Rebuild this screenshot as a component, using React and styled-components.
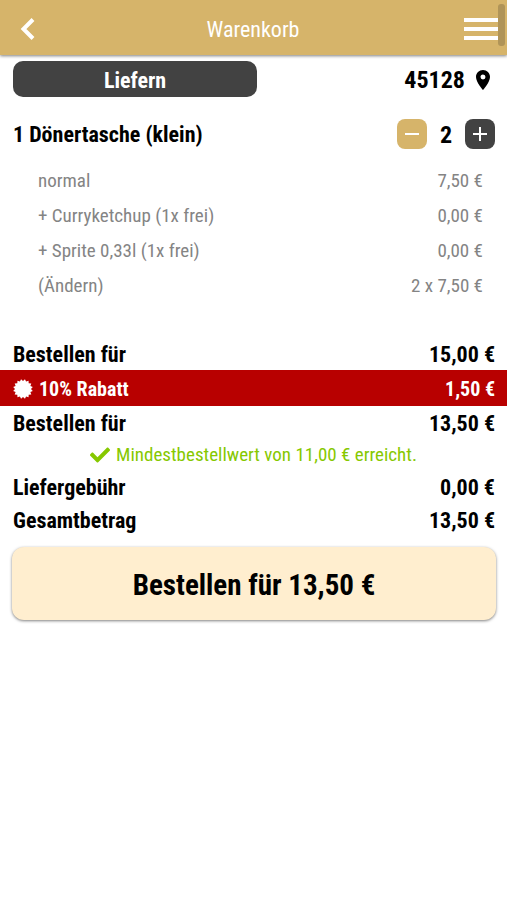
import React from "react";
import styled, { createGlobalStyle } from "styled-components";
import { FaCheck } from "react-icons/fa";
import { MdAdd, MdLocationOn, MdRemove } from "react-icons/md";

const COLORS = {
  gold: "#d6b46a",
  dark: "#424242",
  cream: "#ffeecf",
  red: "#b80000",
  green: "#86c800",
  gray: "#848484",
  black: "#000000",
  white: "#ffffff",
};

const EXTRAS = [
  { name: "normal", price: "7,50 €" },
  { name: "+ Curryketchup (1x frei)", price: "0,00 €" },
  { name: "+ Sprite 0,33l (1x frei)", price: "0,00 €" },
];

const App = () => {
  return (
    <Page>
      <GlobalStyle />
      <Header>
        <HeaderButton type="button" aria-label="Zurück">
          <BackIcon />
        </HeaderButton>
        <Title>Warenkorb</Title>
        <HeaderButton type="button" aria-label="Menü" $end>
          <MenuIcon />
        </HeaderButton>
        <ScrollThumb />
      </Header>

      <main>
        <DeliveryRow>
          <DeliveryButton type="button">Liefern</DeliveryButton>
          <ZipButton type="button">
            45128
            <MdLocationOn size={24} />
          </ZipButton>
        </DeliveryRow>

        <ItemRow>
          <ItemName>1 Dönertasche (klein)</ItemName>
          <Stepper>
            <StepButton type="button" aria-label="Weniger" $color={COLORS.gold}>
              <MdRemove size={24} />
            </StepButton>
            <Quantity>2</Quantity>
            <StepButton type="button" aria-label="Mehr" $color={COLORS.dark}>
              <MdAdd size={24} />
            </StepButton>
          </Stepper>
        </ItemRow>

        <Extras>
          {EXTRAS.map(({ name, price }) => (
            <Extra key={name}>
              <span>{name}</span>
              <span>{price}</span>
            </Extra>
          ))}
          <Extra>
            <EditLink href="#aendern">(Ändern)</EditLink>
            <span>2 x 7,50 €</span>
          </Extra>
        </Extras>

        <SumRow>
          <span>Bestellen für</span>
          <span>15,00 €</span>
        </SumRow>
        <DiscountRow>
          <DiscountLabel>
            <BadgeIcon />
            10% Rabatt
          </DiscountLabel>
          <span>1,50 €</span>
        </DiscountRow>
        <SumRow>
          <span>Bestellen für</span>
          <span>13,50 €</span>
        </SumRow>
        <MinimumNote>
          <FaCheck size={20} />
          Mindestbestellwert von 11,00 € erreicht.
        </MinimumNote>
        <SumRow>
          <span>Liefergebühr</span>
          <span>0,00 €</span>
        </SumRow>
        <SumRow>
          <span>Gesamtbetrag</span>
          <span>13,50 €</span>
        </SumRow>

        <OrderArea>
          <OrderButton type="button">Bestellen für 13,50 €</OrderButton>
        </OrderArea>
      </main>
    </Page>
  );
};

const BackIcon = () => (
  <svg width="40" height="40" viewBox="0 0 40 40" fill="none">
    <path d="M25 10.5 15.5 20 25 29.5" stroke="currentColor" strokeWidth="4" />
  </svg>
);

const MenuIcon = () => (
  <svg width="34" height="24" viewBox="0 0 34 24" fill="currentColor">
    <rect y="1" width="34" height="4" />
    <rect y="10" width="34" height="4" />
    <rect y="19" width="34" height="4" />
  </svg>
);

const BADGE_TEETH = 16;

const BADGE_POINTS = Array.from({ length: BADGE_TEETH * 2 }, (_, i) => {
  const radius = i % 2 === 0 ? 10 : 8;
  const angle = ((i + 1) * Math.PI) / BADGE_TEETH;
  const x = 10 + radius * Math.sin(angle);
  const y = 10 - radius * Math.cos(angle);
  return `${x.toFixed(2)},${y.toFixed(2)}`;
}).join(" ");

const BadgeIcon = () => (
  <svg width="20" height="20" viewBox="0 0 20 20" fill="currentColor">
    <polygon points={BADGE_POINTS} />
  </svg>
);

const GlobalStyle = createGlobalStyle`
  *,
  *::before,
  *::after {
    box-sizing: border-box;
  }

  body {
    margin: 0;
    background: ${COLORS.white};
  }

  svg {
    display: block;
    flex-shrink: 0;
  }
`;

const Page = styled.div`
  min-height: 100vh;
  color: ${COLORS.black};
  font-family: "Roboto Condensed", Roboto, sans-serif;
  font-size: 22px;
`;

const Button = styled.button`
  display: flex;
  align-items: center;
  justify-content: center;
  padding: 0;
  border: none;
  background: none;
  color: inherit;
  font: inherit;
  cursor: pointer;
`;

const Header = styled.header`
  position: relative;
  display: grid;
  grid-template-columns: 1fr auto 1fr;
  align-items: center;
  height: 55px;
  padding: 2px 9px 0 8px;
  background: ${COLORS.gold};
  color: ${COLORS.white};
  box-shadow: 0 1px 3px rgba(0, 0, 0, 0.5);
`;

const HeaderButton = styled(Button)`
  justify-self: ${({ $end }) => ($end ? "end" : "start")};
`;

const Title = styled.h1`
  margin: 0;
  padding-top: 2px;
  font-size: 22px;
  font-weight: 400;
`;

const ScrollThumb = styled.div`
  position: absolute;
  top: 4px;
  right: 2px;
  width: 7px;
  height: 42px;
  border-radius: 3px;
  background: #b09458;
`;

const Row = styled.div`
  display: flex;
  align-items: center;
  justify-content: space-between;
  padding: 0 12px 0 13px;
`;

const DeliveryRow = styled(Row)`
  padding-top: 6px;
`;

const DeliveryButton = styled(Button)`
  flex: 0 0 244px;
  height: 36px;
  padding-top: 2px;
  border-radius: 10px;
  background: ${COLORS.dark};
  color: ${COLORS.white};
  font-weight: 700;
`;

const ZipButton = styled(Button)`
  gap: 6px;
  padding-top: 2px;
  font-size: 24px;
  font-weight: 700;
`;

const ItemRow = styled(Row)`
  padding-top: 22px;
`;

const ItemName = styled.h2`
  margin: 0;
  font-size: 22px;
  font-weight: 700;
`;

const Stepper = styled.div`
  display: flex;
  align-items: center;
`;

const StepButton = styled(Button)`
  width: 30px;
  height: 30px;
  border-radius: 8px;
  background: ${({ $color }) => $color};
  color: ${COLORS.white};
`;

const Quantity = styled.span`
  width: 38px;
  padding-top: 2px;
  text-align: center;
  font-size: 24px;
  font-weight: 700;
`;

const Extras = styled.ul`
  margin: 0;
  padding: 14px 24px 34px 38px;
  list-style: none;
  color: ${COLORS.gray};
  font-size: 19px;
  line-height: 35px;
`;

const Extra = styled.li`
  display: flex;
  justify-content: space-between;
`;

const EditLink = styled.a`
  color: inherit;
  text-decoration: none;
`;

const SumRow = styled(Row)`
  padding-top: 3px;
  font-weight: 700;
  line-height: 30px;
`;

const DiscountRow = styled(Row)`
  padding-top: 2px;
  background: ${COLORS.red};
  color: ${COLORS.white};
  font-size: 20px;
  font-weight: 700;
  line-height: 34px;
`;

const DiscountLabel = styled.span`
  display: flex;
  align-items: center;
  gap: 6px;
`;

const MinimumNote = styled.p`
  display: flex;
  align-items: center;
  justify-content: center;
  gap: 6px;
  margin: 0;
  color: ${COLORS.green};
  font-size: 19px;
  line-height: 31px;
`;

const OrderArea = styled.div`
  padding: 11px 11px 11px 12px;
`;

const OrderButton = styled(Button)`
  width: 100%;
  height: 73px;
  padding-top: 2px;
  border-radius: 12px;
  background: ${COLORS.cream};
  font-size: 29px;
  font-weight: 700;
  box-shadow: 0 1px 3px rgba(0, 0, 0, 0.5);
`;

export default App;
